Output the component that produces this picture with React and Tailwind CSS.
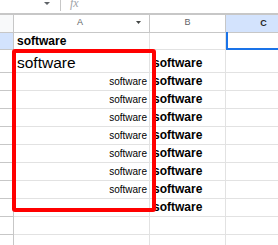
import React from 'react';

const rowBorder = 'border-r border-b border-[#e2e2e2]';
const headBorder = 'border-r border-b border-[#c7c7c7]';

const Small = () => (
  <div className={`${rowBorder} flex items-end justify-end pr-[2px] pb-[3px]`}>
    <span className="text-[10px] leading-none text-black">software</span>
  </div>
);

const Bold = () => (
  <div className={`${rowBorder} flex items-end pl-[3px] pb-[3px]`}>
    <span className="text-[12px] leading-none font-bold text-black">software</span>
  </div>
);

const Empty = () => <div className={rowBorder}></div>;

const RowHead = ({ active }) => (
  <div className={`${headBorder} ${active ? 'bg-[#d3e3fd]' : 'bg-white'}`}></div>
);

const App = () => {
  const smallRows = [3, 4, 5, 6, 7, 8, 9];

  return (
    <div className="relative w-[278px] h-[245px] overflow-hidden bg-white font-['Liberation_Sans',Arial,sans-serif]">
      {/* formula bar */}
      <div className="flex h-[13px] items-start">
        <div className="w-[61px] h-[11px] border-r border-[#c7c7c7] flex justify-end pr-[10px] pt-[2px]">
          <svg width="6" height="3" viewBox="0 0 6 3">
            <path d="M0 0 L6 0 L3 3 Z" fill="#5f6368" />
          </svg>
        </div>
        <span className="ml-[9px] -mt-[3px] text-[12px] leading-none italic text-[#a0a4a8] font-['Liberation_Serif',serif]">fx</span>
      </div>
      <div className="h-[2px] bg-[#c7c7c7]"></div>

      <div className="grid grid-cols-[14px_136px_76px_76px] grid-rows-[18px_17px_23px_repeat(10,18px)]">
        {/* column headers */}
        <div className={`${headBorder} bg-[#f8f9fa]`}></div>
        <div className={`${headBorder} relative flex items-center justify-center pr-[3px]`}>
          <span className="text-[9px] leading-none text-[#5f6368] -mt-[2px]">A</span>
          <svg className="absolute left-[122px] top-[6px]" width="5" height="3" viewBox="0 0 5 3">
            <path d="M0 0 L5 0 L2.5 3 Z" fill="#444746" />
          </svg>
        </div>
        <div className={`${headBorder} flex items-center justify-center`}>
          <span className="text-[9px] leading-none text-[#5f6368] -mt-[2px]">B</span>
        </div>
        <div className={`${headBorder} bg-[#d3e3fd] flex items-center justify-center`}>
          <span className="text-[9px] leading-none font-bold text-[#1f1f1f] -mt-[1px]">C</span>
        </div>

        {/* row 1 */}
        <RowHead active />
        <div className={`${rowBorder} flex items-end pl-[3px] pb-[2px]`}>
          <span className="text-[12px] leading-none font-bold text-black">software</span>
        </div>
        <Empty />
        <div className={`${rowBorder} relative`}>
          <div className="absolute left-0 right-0 -top-px -bottom-px border-l-2 border-b-2 border-[#1a73e8]"></div>
        </div>

        {/* row 2 */}
        <RowHead />
        <div className={`${rowBorder} flex items-end pl-[3px] pb-[2px]`}>
          <span className="text-[15.5px] leading-none text-black">software</span>
        </div>
        <Bold />
        <Empty />

        {smallRows.map((r) => (
          <React.Fragment key={r}>
            <RowHead />
            <Small />
            <Bold />
            <Empty />
          </React.Fragment>
        ))}

        {/* row 10 */}
        <RowHead />
        <Empty />
        <Bold />
        <Empty />

        {[11, 12].map((r) => (
          <React.Fragment key={r}>
            <RowHead />
            <Empty />
            <Empty />
            <Empty />
          </React.Fragment>
        ))}
      </div>

      {/* annotation box */}
      <div className="absolute left-[12px] top-[49px] w-[144px] h-[163px] border-4 border-[#ff0000] rounded-[3px]"></div>
    </div>
  );
};

export default App;
